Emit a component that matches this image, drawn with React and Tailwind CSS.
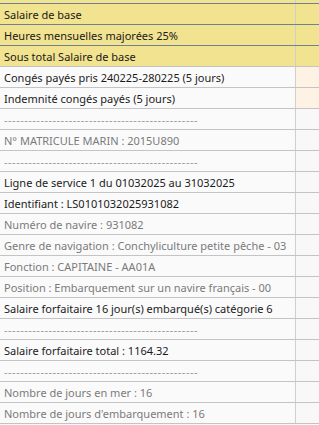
export default function App() {
  const dash = "-".repeat(48);
  const rows = [
    { t: "Salaire de base", bg: "y", c: "d", b: "dark" },
    { t: "Heures mensuelles majorées 25%", bg: "y", c: "d", b: "dark" },
    { t: "Sous total Salaire de base", bg: "y", c: "d", b: "g" },
    { t: "Congés payés pris 240225-280225 (5 jours)", bg: "c", c: "d", b: "g" },
    { t: "Indemnité congés payés (5 jours)", bg: "c", c: "d", b: "g" },
    { t: dash, bg: "w", c: "g", b: "g" },
    { t: "N° MATRICULE MARIN : 2015U890", bg: "w", c: "g", b: "g" },
    { t: dash, bg: "w", c: "g", b: "g" },
    { t: "Ligne de service 1 du 01032025 au 31032025", bg: "w", c: "d", b: "g" },
    { t: "Identifiant : LS0101032025931082", bg: "w", c: "d", b: "g" },
    { t: "Numéro de navire : 931082", bg: "w", c: "g", b: "g" },
    { t: "Genre de navigation : Conchyliculture petite pêche - 03", bg: "w", c: "g", b: "g" },
    { t: "Fonction : CAPITAINE - AA01A", bg: "w", c: "g", b: "g" },
    { t: "Position : Embarquement sur un navire français - 00", bg: "w", c: "g", b: "g" },
    { t: "Salaire forfaitaire 16 jour(s) embarqué(s) catégorie 6", bg: "w", c: "d", b: "g" },
    { t: dash, bg: "w", c: "g", b: "g" },
    { t: "Salaire forfaitaire total : 1164.32", bg: "w", c: "d", b: "g" },
    { t: dash, bg: "w", c: "g", b: "g" },
    { t: "Nombre de jours en mer : 16", bg: "w", c: "g", b: "g" },
    { t: "Nombre de jours d'embarquement : 16", bg: "w", c: "g", b: "g" },
  ];
  return (
    <div className="w-[319px] h-[425px] overflow-hidden bg-[#fafafa] font-['Noto_Sans','DejaVu_Sans',sans-serif] text-[11px]">
      <div className="flex h-[3px] bg-[#f1e38f] border-b border-[#6f8194] box-content">
        <div className="w-[295px]" />
        <div className="w-px bg-[#cfcfcf]" />
        <div className="flex-1" />
      </div>
      {rows.map((r, i) => (
        <div
          key={i}
          className={
            "flex h-[21px] border-b " +
            (r.b === "dark" ? "border-[#6f8194]" : "border-[#c4c4c4]")
          }
        >
          <div
            className={
              "w-[295px] pl-[4px] flex items-center whitespace-nowrap overflow-hidden leading-none " +
              (r.bg === "y" ? "bg-[#f1e38f] " : "bg-[#fafafa] ") +
              (r.c === "d" ? "text-[#1a1a1a]" : "text-[#7a7a7a]")
            }
          >
            <span className={r.t === dash ? "tracking-[0.5px] text-[#999]" : ""}>{r.t}</span>
          </div>
          <div className="w-px bg-[#cfcfcf]" />
          <div
            className={
              "flex-1 " +
              (r.bg === "y" ? "bg-[#f1e38f]" : r.bg === "c" ? "bg-[#fdf2e4]" : "bg-[#f8f8f8]")
            }
          />
        </div>
      ))}
    </div>
  );
}
